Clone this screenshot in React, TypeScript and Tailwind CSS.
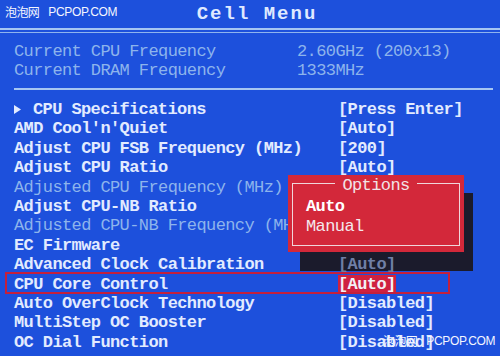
const rows: { label: string; value?: string; dim?: boolean; arrow?: boolean; shaded?: boolean; active?: boolean }[] = [
  { label: 'CPU Specifications', value: '[Press Enter]', arrow: true },
  { label: "AMD Cool'n'Quiet", value: '[Auto]' },
  { label: 'Adjust CPU FSB Frequency (MHz)', value: '[200]' },
  { label: 'Adjust CPU Ratio', value: '[Auto]' },
  { label: 'Adjusted CPU Frequency (MHz)', dim: true },
  { label: 'Adjust CPU-NB Ratio' },
  { label: 'Adjusted CPU-NB Frequency (MHz)', dim: true },
  { label: 'EC Firmware' },
  { label: 'Advanced Clock Calibration', value: '[Auto]', shaded: true },
  { label: 'CPU Core Control', value: '[Auto]', active: true },
  { label: 'Auto OverClock Technology', value: '[Disabled]' },
  { label: 'MultiStep OC Booster', value: '[Disabled]' },
  { label: 'OC Dial Function', value: '[Disabled]' },
]

function Watermark({ className }: { className: string }) {
  return (
    <div className={`absolute z-40 flex items-center gap-[9px] whitespace-nowrap text-[#f4f6ff] ${className}`}>
      <span className="text-[12px] font-['Noto_Sans_CJK_SC',sans-serif]">泡泡网</span>
      <span className="text-[12px] tracking-[-0.3px] font-['Liberation_Sans',sans-serif]">PCPOP.COM</span>
    </div>
  )
}

export default function App() {
  return (
    <div className="relative h-[356px] w-[500px] overflow-hidden bg-[#1d50dc] font-['Liberation_Mono',monospace] text-[17px] tracking-[-0.6px]">
      <Watermark className="left-[5px] top-[3px]" />

      <div className="flex h-[28px] items-center justify-center pl-[14px] text-[19px] font-bold tracking-[2px] text-[#dfe9ff]">
        Cell Menu
      </div>
      <div className="h-[2px] bg-[#a6c6f2]" />
      <div className="h-[2px]" />
      <div className="h-[1px] bg-[#8fb4ee]" />

      <div className="px-[14px] pt-[9px] leading-[19px] text-[#8db4ec]">
        <div className="flex">
          <span className="w-[283px]">Current CPU Frequency</span>
          <span>2.60GHz (200x13)</span>
        </div>
        <div className="flex">
          <span className="w-[283px]">Current DRAM Frequency</span>
          <span>1333MHz</span>
        </div>
      </div>

      <div className="ml-[14px] mr-[7px] mt-[8px] h-[2px] bg-[#a6c6f2]" />

      <div className="relative mt-[10px] pl-[14px] leading-[19.4px]">
        {rows.map(row => (
          <div key={row.label} className="flex whitespace-nowrap">
            <span className={`flex w-[324px] items-center ${row.dim ? 'text-[#8db4ec]' : 'font-bold text-[#e2ebff]'}`}>
              {row.arrow && (
                <svg width="7" height="9" viewBox="0 0 7 9" className="mr-[12px]">
                  <path d="M0 0 L7 4.5 L0 9 Z" fill="#e2ebff" />
                </svg>
              )}
              {row.label}
            </span>
            {row.value && (
              <span
                className={`relative font-bold ${
                  row.shaded ? 'z-20 text-[#6f7fa6]' : row.active ? 'bg-[#cf2140] text-[#f4f0f6]' : 'text-[#e2ebff]'
                }`}
              >
                {row.value}
              </span>
            )}
          </div>
        ))}
      </div>

      {/* selection frame */}
      <div className="pointer-events-none absolute left-[5px] top-[272px] z-30 h-[22px] w-[445px] border-2 border-[#c4203c]" />

      {/* options popup */}
      <div className="absolute left-[300px] top-[193px] z-10 h-[78px] w-[173px] bg-[#1b1b2c]" />
      <div className="absolute left-[288px] top-[175px] z-20 h-[77px] w-[176px] bg-[#d3283a] p-[4px]">
        <div className="relative mt-[4px] h-[63px] border-[1.5px] border-[#f0d6da]">
          <div className="absolute -top-[8px] left-0 right-0 flex justify-center">
            <span className="bg-[#d3283a] px-[7px] leading-[19px] text-[#f2e2e6]">Options</span>
          </div>
          <div className="pl-[13px] pt-[13px] leading-[20px]">
            <div className="font-bold text-white">Auto</div>
            <div className="text-[#f4e8ec]">Manual</div>
          </div>
        </div>
      </div>

      <Watermark className="left-[383px] top-[332px]" />
    </div>
  )
}
